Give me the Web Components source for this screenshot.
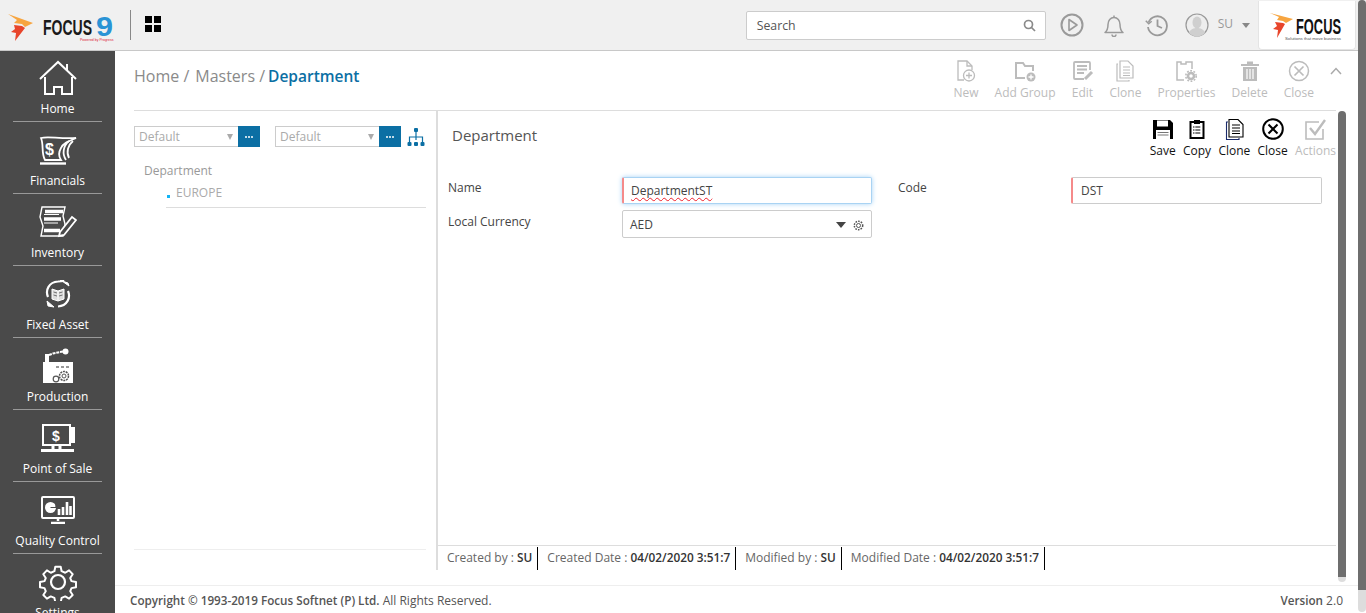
<!DOCTYPE html>
<html lang="en">
<head>
<meta charset="utf-8">
<title>Department</title>
<style>
html,body{margin:0;height:100%;overflow:hidden;background:#fff;font-family:"Open Sans","Noto Sans",sans-serif}
svg{display:block}
</style>
</head>
<body>
<focus-app>
  <top-bar slot="top">
    <brand-logo></brand-logo>
    <search-box slot="search">Search</search-box>
    <svg slot="icons" width="24" height="24" viewBox="0 0 24 24" fill="none" stroke="#9a9a9a" stroke-width="2"><circle cx="12" cy="12" r="10.5"/><path d="M9 6.500v11l8-5.500z" stroke-width="1.600" stroke-linejoin="round"/></svg>
    <svg slot="icons" width="24" height="24" viewBox="0 0 24 24" fill="none" stroke="#9a9a9a" stroke-width="1.500"><path d="M3 19.500c2.500-2 3-4 3-8 0-4 2.500-7 6-7s6 3 6 7c0 4 .5 6 3 8z" stroke-linejoin="round"/><path d="M10 21.500a2 2 0 0 0 4 0M12 4.500V2.500"/></svg>
    <svg slot="icons" width="24" height="24" viewBox="0 0 24 24" fill="none" stroke="#9a9a9a" stroke-width="1.800"><path d="M3.500 9.500A9.500 9.500 0 1 1 3 14"/><path d="M.8 7.800l2.900 3 3-2.600" stroke-width="1.500"/><path d="M12.500 6.500v6.500l4.500 2"/></svg>
    <user-menu slot="user">SU</user-menu>
    <partner-logo slot="partner"></partner-logo>
  </top-bar>

  <side-nav slot="side">
    <nav-item><svg slot="icon" width="38" height="36" viewBox="0 0 38 36" fill="none" stroke="#fff" stroke-width="2"><path d="M1 19 19 2 37 19"/><path d="M28 10V4"/><path d="M6 17V34H15V27H23V34H33V17"/></svg>Home</nav-item>
    <nav-item><svg slot="icon" width="38" height="30" viewBox="0 0 38 30" fill="none" stroke="#fff" stroke-width="2"><path d="M2 3C9 1 20 4 37 3 30 6 24 8 22 13 19 18 20 22 22 25H6C2 18 5 10 2 3Z" stroke-width="1.800"/><path d="M30 6C24 11 23 19 27 25M34 6C29 10 27 17 30 23" stroke-width="1.800"/><path d="M1 28.500H27" stroke-width="2.400"/><text x="6" y="20" font-family="'Liberation Sans',sans-serif" font-weight="700" font-size="16" fill="#fff" stroke="none">$</text></svg>Financials</nav-item>
    <nav-item><svg slot="icon" width="38" height="32" viewBox="0 0 38 32" fill="none" stroke="#fff" stroke-width="1.400"><path d="M3 1H26L24 10 26 18 24 30H2L4 20 1 11Z"/><path d="M6 5.500H24M5 13H22M5 24.500H21" stroke-width="3.400"/><path d="M5 8.500H20M5 17H19" stroke-width="1"/><path d="M21 26 33 11 37 14 25 29 20 30Z" fill="#4a4a4a" stroke-width="1.800"/></svg>Inventory</nav-item>
    <nav-item><svg slot="icon" width="26" height="28" viewBox="0 0 26 28" fill="none" stroke="#fff"><path d="M3 17C0 10 4 2 13 1.500L19 1 15 -0M23 11C26 18 22 26 13 26.500" stroke-width="2.200"/><path d="M2 21 9 27 3 26ZM24 6 17 1 23 3Z" fill="#fff"/><path d="M7 9 13 11 19 9V19L13 21 7 19ZM13 11V21" fill="#ddd" stroke-width="1"/><path d="M8.500 12 12 13M8.500 15 12 16M14 13 17.500 12M14 16 17.500 15" stroke="#555" stroke-width=".8"/></svg>Fixed Asset</nav-item>
    <nav-item><svg slot="icon" width="30" height="36" viewBox="0 0 30 36" fill="none" stroke="#fff"><path d="M2 14V6H6V14Z" fill="#fff" stroke="none"/><path d="M6 7 10 5.500 15 4.500 20 3.500" stroke-width="2" stroke-dasharray="3 .8"/><circle cx="22.500" cy="3.500" r="3" fill="#fff" stroke="none"/><path d="M0 35V14H30V35Z" fill="#fff" stroke="none"/><path d="M13 19h3M18 19h3M23 19h3" stroke="#777" stroke-width="1.500"/><circle cx="21" cy="28" r="4.500" fill="#fff" stroke="#555" stroke-width="1.500" stroke-dasharray="2 .8"/><circle cx="21" cy="28" r="2" fill="#fff" stroke="#555"/><circle cx="13" cy="31" r="2.800" fill="#fff" stroke="#555" stroke-width="1.200"/></svg>Production</nav-item>
    <nav-item><svg slot="icon" width="36" height="28" viewBox="0 0 36 28" fill="none" stroke="#fff" stroke-width="2"><rect x="3" y="1" width="27" height="20"/><path d="M30 4H34V18H30" fill="#fff"/><path d="M1 26.500H34" stroke-width="3"/><path d="M13 21V25M20 21V25" stroke-width="3"/><text x="12" y="17" font-family="'Liberation Sans',sans-serif" font-weight="700" font-size="14" fill="#fff" stroke="none">$</text></svg>Point of Sale</nav-item>
    <nav-item><svg slot="icon" width="34" height="28" viewBox="0 0 34 28" fill="none" stroke="#fff" stroke-width="2"><rect x="1" y="1" width="32" height="21" rx="1"/><path d="M17 22V25M10 27H24" stroke-width="2.500"/><circle cx="9.500" cy="11.500" r="5.500" fill="#fff" stroke="none"/><path d="M9.500 11.500H15V8" stroke="#4a4a4a" stroke-width="1.200"/><path d="M18 19V13M22 19V11M26 19V6M29.500 19V10" stroke-width="2.600"/></svg>Quality Control</nav-item>
    <nav-item><svg slot="icon" width="38" height="38" viewBox="0 0 38 38" fill="none" stroke="#fff" stroke-width="2.200" stroke-linejoin="round"><path d="M16 2h6l1 5 4 1.700 4.300-2.700 4 4.300-2.700 4.300 1.400 3.400 5 1v5.800l-5 1-1.400 3.400 2.700 4.300-4 4-4.300-2.500-4 1.600-1 5h-6l-1-5-4-1.600-4.300 2.500-4-4 2.700-4.300-1.400-3.400-5-1v-5.800l5-1 1.400-3.400L2.700 10.300l4-4.300L11 8.700 15 7z" transform="translate(1.900 1.900) scale(.9)"/><circle cx="19" cy="19" r="7"/></svg>Settings</nav-item>
  </side-nav>

  <main-view slot="main">
    <page-head slot="head">
      <bread-crumb>
        <span>Home /</span><span style="margin-left:1px">Masters /</span><b>Department</b>
      </bread-crumb>
      <tool-bar>
        <tool-btn><svg slot="icon" width="20" height="22" viewBox="0 0 20 22" fill="none" stroke="currentColor" stroke-width="1.300"><path d="M8 20H2V1H11L16 6V10"/><path d="M11 1V6H16"/><circle cx="13" cy="15.500" r="5.500"/><path d="M13 12.500v6M10 15.500h6"/></svg>New</tool-btn>
        <tool-btn><svg slot="icon" width="22" height="22" viewBox="0 0 22 22" fill="none" stroke="currentColor" stroke-width="2"><path d="M11 18H2V3H9L11 6H19V11"/><circle cx="17" cy="17" r="4.500" fill="currentColor" stroke="none"/><path d="M17 14.500v5M14.500 17h5" stroke="#fff" stroke-width="1.300"/></svg>Add Group</tool-btn>
        <tool-btn><svg slot="icon" width="22" height="22" viewBox="0 0 22 22" fill="none" stroke="currentColor" stroke-width="1.800"><path d="M12 19H3a1 1 0 0 1-1-1V3a1 1 0 0 1 1-1h14a1 1 0 0 1 1 1v7"/><path d="M5 6h10M5 9.500h10M5 13h7"/><path d="M13 19 20 12" stroke-width="3"/></svg>Edit</tool-btn>
        <tool-btn><svg slot="icon" width="20" height="22" viewBox="0 0 20 22" fill="none" stroke="currentColor" stroke-width="1.200"><path d="M3 4H2V21H14V20"/><path d="M5 1H13L18 6V18H5Z"/><path d="M8 7h7M8 10h7M8 13h7M8 15.500h7"/></svg>Clone</tool-btn>
        <tool-btn><svg slot="icon" width="22" height="22" viewBox="0 0 22 22" fill="none" stroke="currentColor" stroke-width="1.500"><path d="M9 20H2V2H6V4H11V2H17V9"/><circle cx="16" cy="16" r="3" stroke-width="2.500"/><circle cx="16" cy="16" r="5.200" stroke-width="1.600" stroke-dasharray="1.800 1.500"/></svg>Properties</tool-btn>
        <tool-btn><svg slot="icon" width="20" height="22" viewBox="0 0 20 22" fill="currentColor"><path d="M1 4H19V6H1ZM7 1.500H13V4H7ZM3 7H17V21H3Z"/><path d="M7 9V19M10 9V19M13 9V19" stroke="#fff" stroke-width="1.200"/></svg>Delete</tool-btn>
        <tool-btn><svg slot="icon" width="22" height="22" viewBox="0 0 22 22" fill="none" stroke="currentColor" stroke-width="1.500"><circle cx="11" cy="11" r="9.500"/><path d="M6.500 6.500 15.500 15.500M15.500 6.500 6.500 15.500" stroke-width="1.700"/></svg>Close</tool-btn>
        <svg slot="end" width="12" height="8" viewBox="0 0 12 8" fill="none" stroke="#aaa" stroke-width="1.500"><path d="M1 7 6 1.500 11 7"/></svg>
      </tool-bar>
    </page-head>

    <tree-panel slot="left">
      <picker-row>
        <combo-pick>Default</combo-pick>
        <combo-pick>Default</combo-pick>
        <svg width="18" height="20" viewBox="0 0 18 20" fill="#0b6fa4" stroke="#0b6fa4"><rect x="7" y="1" width="4" height="4" rx="1" stroke="none"/><path d="M9 4V13M2.500 15V10H15.500V15" fill="none" stroke-width="1.200"/><g stroke="none"><rect x=".5" y="15" width="4" height="4" rx="1"/><rect x="7" y="15" width="4" height="4" rx="1"/><rect x="13.500" y="15" width="4" height="4" rx="1"/></g></svg>
      </picker-row>
      <tree-root>Department</tree-root>
      <tree-node>EUROPE</tree-node>
    </tree-panel>

    <detail-panel slot="right">
      <form-head slot="head">
        <span slot="title">Department</span>
        <tool-btn dark><svg slot="icon" width="22" height="21" viewBox="0 0 22 21"><path d="M1 1H18L21 4V20H1Z" fill="#000"/><rect x="5" y="1.500" width="11" height="6" fill="#fff"/><rect x="4" y="11" width="14" height="9" fill="#fff"/><path d="M5.500 13.500h11M5.500 16h11" stroke="#777"/></svg>Save</tool-btn>
        <tool-btn dark><svg slot="icon" width="16" height="20" viewBox="0 0 16 20" fill="none" stroke="#000"><rect x="1.500" y="3" width="13" height="16" stroke-width="2"/><rect x="5" y="1" width="6" height="4" fill="#000" stroke="none"/><path d="M4 8h8M4 11h8M4 14h8" stroke-dasharray="1.500 .8 5"/></svg>Copy</tool-btn>
        <tool-btn dark><svg slot="icon" width="19" height="21" viewBox="0 0 19 21" fill="none" stroke="#000" stroke-width="1.100"><path d="M3 3H1.500V20.500H14V19" stroke="#1a2a6a"/><path d="M4 .5H13L18 5.500V18H4Z"/><path d="M7 6h8M7 9h8M7 12h8M7 14.500h8"/></svg>Clone</tool-btn>
        <tool-btn dark><svg slot="icon" width="22" height="22" viewBox="0 0 22 22" fill="none" stroke="#000" stroke-width="2"><circle cx="11" cy="11" r="9.800"/><path d="M6.500 6.500 15.500 15.500M15.500 6.500 6.500 15.500"/></svg>Close</tool-btn>
        <tool-btn><svg slot="icon" width="21" height="21" viewBox="0 0 21 21" fill="none" stroke="currentColor" stroke-width="1.600"><path d="M18 10V20H1V3H14"/><path d="M5 9 10 15 20 1" stroke-width="2.400"/></svg>Actions</tool-btn>
      </form-head>
      <form-grid slot="form">
        <form-label>Name</form-label>
        <text-field required focused><span style="text-decoration:underline wavy #f0202c 1px;text-underline-offset:2px;text-decoration-skip-ink:none">DepartmentST</span></text-field>
        <form-label>Code</form-label>
        <text-field required>DST</text-field>
        <form-label second>Local Currency</form-label>
        <select-field>AED</select-field>
      </form-grid>
      <status-bar slot="status">
        <status-cell>Created by : <b>SU</b></status-cell>
        <status-cell>Created Date : <b>04/02/2020 3:51:7</b></status-cell>
        <status-cell>Modified by : <b>SU</b></status-cell>
        <status-cell>Modified Date : <b>04/02/2020 3:51:7</b></status-cell>
      </status-bar>
    </detail-panel>
  </main-view>

  <app-footer slot="footer">
    <span><b style="font-weight:600;font-size:11.700px">Copyright © 1993-2019 Focus Softnet (P) Ltd.</b> All Rights Reserved.</span>
    <span slot="end"><b style="font-weight:600;font-size:11.700px">Version</b> 2.0</span>
  </app-footer>

  <scroll-thumb slot="overlay" style="--x:1358px;--y:0px;--h:612px;--w:8px;--tail:22px"></scroll-thumb>
  <scroll-thumb slot="overlay" style="--x:1338px;--y:111px;--h:471px;--w:8px;--tail:5px"></scroll-thumb>
</focus-app>

<script>
function def(name, css, html){
  customElements.define(name, class extends HTMLElement{
    constructor(){
      super();
      this.attachShadow({mode:'open'}).innerHTML = '<style>'+css+'</style>'+html;
    }
  });
}

def('focus-app',
`:host{display:grid;grid-template-columns:115px 1fr;grid-template-rows:51px 534px 28px;width:1366px;height:613px;position:relative;overflow:hidden;color:#444;font:12px/16px "Open Sans","Noto Sans",sans-serif}
 .top{grid-column:1/3}`,
`<div class="top"><slot name="top"></slot></div>
 <slot name="side"></slot>
 <slot name="main"></slot>
 <slot name="footer"></slot>
 <slot name="overlay"></slot>`);

def('top-bar',
`:host{display:flex;align-items:center;height:51px;box-sizing:border-box;background:#f0f0f0;border-bottom:1px solid #c8c8c8}
 .rule{width:1px;height:30px;background:#888;margin-left:8px}
 .apps{display:grid;grid-template-columns:7px 7px;grid-auto-rows:7px;gap:2px;margin:-3px 0 0 14px}
 .apps i{width:7px;height:7px;background:#000;display:block}
 .right{margin-left:auto;display:flex;align-items:center}
 .icons{display:flex;align-items:center;gap:18.500px;margin-left:14px}
 .end{margin-left:8px;margin-right:10px;align-self:flex-start}`,
`<slot></slot><span class="rule"></span>
 <span class="apps"><i></i><i></i><i></i><i></i></span>
 <div class="right">
   <slot name="search"></slot>
   <div class="icons"><slot name="icons"></slot></div>
   <slot name="user"></slot>
   <div class="end"><slot name="partner"></slot></div>
 </div>`);

def('brand-logo',
`:host{display:block;width:122px;height:50px;flex:none}`,
`<svg width="122" height="50" viewBox="0 0 122 50">
  <path fill="#f7a540" d="M8 14 33 23 25 27 22 24 14 23 17 20Z"/><path fill="#e8452b" d="M14 25 22 26 25 28 15 41 16 33 11 32 15 29Z"/>
  <text x="43" y="35" font-family="'Liberation Sans',sans-serif" font-weight="700" font-size="22" textLength="49" lengthAdjust="spacingAndGlyphs" fill="#1a1a1a">FOCUS</text>
  <text x="96" y="36" font-family="'Liberation Sans',sans-serif" font-weight="700" font-size="28" textLength="17" lengthAdjust="spacingAndGlyphs" fill="#2a93d5">9</text>
  <text x="80" y="41" font-family="'Liberation Sans',sans-serif" font-size="3.500" fill="#d23">Powered by Progress</text>
 </svg>`);

def('search-box',
`:host{display:flex;align-items:center;justify-content:space-between;box-sizing:border-box;width:300px;height:29px;padding:1px 9px 0 10px;background:#fff;border:1px solid #ccc;border-radius:2px;color:#555;font-size:12.300px}`,
`<slot></slot><svg width="13" height="13" viewBox="0 0 13 13" fill="none" stroke="#8a8a8a" stroke-width="1.700"><circle cx="5.500" cy="5.500" r="4"/><path d="M8.500 8.500 12 12"/></svg>`);

def('user-menu',
`:host{display:flex;align-items:center;margin-left:16px;color:#999;font-size:12px}
 span{margin:-3px 0 0 9px}
 i{width:0;height:0;border:4px solid transparent;border-top:5px solid #888;border-bottom:0;margin-left:9px}`,
`<svg width="24" height="24" viewBox="0 0 24 24"><circle cx="12" cy="12" r="11" fill="#eee" stroke="#999" stroke-width="1.200"/><ellipse cx="12" cy="9.500" rx="4.500" ry="6" fill="#cfcfcf"/><path d="M4 20c1-4 5-5 8-5s7 1 8 5a11 11 0 0 1-16 0z" fill="#cfcfcf"/></svg><span><slot></slot></span><i></i>`);

def('partner-logo',
`:host{display:block;width:98px;height:49px;background:#fff;border:1px solid #e4e4e4;border-top:0;border-radius:0 0 4px 4px;box-sizing:border-box}`,
`<svg width="96" height="48" viewBox="0 0 96 48">
  <path fill="#f7a540" d="M11 12 34 18 27 22 24 20 18 19 20 16Z"/><path fill="#e8452b" d="M16 21 24 22 26 23 18 37 19 29 14 28 18 25Z"/>
  <text x="37" y="32.500" font-family="'Liberation Sans',sans-serif" font-weight="700" font-size="21.500" textLength="45" lengthAdjust="spacingAndGlyphs" fill="#111">FOCUS</text>
  <text x="26" y="38.500" font-family="'Liberation Sans',sans-serif" font-size="4" textLength="56" lengthAdjust="spacingAndGlyphs" fill="#555">Solutions that move business</text>
 </svg>`);

def('side-nav',
`:host{display:block;background:#4a4a4a;grid-row:2/4;overflow:hidden;height:562px}
 ::slotted(:first-child){margin-top:-1px}`,
`<slot></slot>`);

def('nav-item',
`:host{display:flex;flex-direction:column;align-items:center;box-sizing:border-box;height:72px;padding:8px 0 4px;position:relative;color:#fff;font-size:12px;line-height:16px;white-space:nowrap}
 .i{height:40px;display:flex;align-items:center;justify-content:center}
 .t{margin-top:3px}
 .r{position:absolute;left:13px;right:13px;bottom:0;height:1px;background:#999}`,
`<div class="i"><slot name="icon"></slot></div><div class="t"><slot></slot></div><div class="r"></div>`);

def('main-view',
`:host{display:flex;flex-direction:column;padding:0 30px 0 19px;min-width:0}
 .body{display:flex;height:459px}`,
`<slot name="head"></slot><div class="body"><slot name="left"></slot><slot name="right"></slot></div>`);

def('page-head',
`:host{display:flex;justify-content:space-between;box-sizing:border-box;height:60px;border-bottom:1px solid #ddd}`,
`<slot></slot>`);

def('bread-crumb',
`:host{display:flex;gap:5px;padding-top:14px;font-size:16px;line-height:22px;color:#8a8a8a}
 ::slotted(b){color:#0b6fa4;font-weight:600;font-size:15.500px;margin-left:-2px}`,
`<slot></slot>`);

def('tool-bar',
`:host{display:flex;align-items:flex-start;gap:16px;padding:9px 0 0;margin-right:-6px}
 .end{padding-top:7px}`,
`<slot></slot><div class="end"><slot name="end"></slot></div>`);

def('tool-btn',
`:host{display:flex;flex-direction:column;align-items:center;color:#bcbcbc;font-size:12px;line-height:16px;white-space:nowrap}
 :host([dark]){color:#111}
 .i{height:22px;display:flex;align-items:center;justify-content:center;margin-bottom:3px}`,
`<div class="i"><slot name="icon"></slot></div><slot></slot>`);

def('tree-panel',
`:host{display:flex;flex-direction:column;box-sizing:border-box;width:302px;flex:none;padding:15px 10px 20px 0;position:relative}
 .line{margin-top:auto;height:1px;background:#eee}`,
`<slot></slot><div class="line"></div>`);

def('picker-row',
`:host{display:flex;align-items:center;gap:15px}
 ::slotted(svg){margin-left:-9px}`,
`<slot></slot>`);

def('combo-pick',
`:host{display:flex;box-sizing:border-box;width:126px;height:21px;color:#aaa;font-size:12px;line-height:19px}
 .box{flex:1;display:flex;align-items:center;justify-content:space-between;padding:0 5px 0 4px;border:1px solid #ccc;border-right:0}
 .box i{width:0;height:0;border:3.500px solid transparent;border-top:6px solid #aaa;border-bottom:0}
 .btn{width:22px;background:#0b6fa4;display:flex;align-items:center;justify-content:center;gap:1px}
 .btn u{width:2px;height:2px;border-radius:50%;background:#fff}`,
`<div class="box"><span><slot></slot></span><i></i></div><div class="btn"><u></u><u></u><u></u></div>`);

def('tree-root',
`:host{display:block;margin:16px 0 0 10px;color:#999;font-size:12px;line-height:16px}`,
`<slot></slot>`);

def('tree-node',
`:host{display:flex;align-items:center;gap:6px;height:22px;margin:3px 0 0 32px;padding:0 0 3px 1px;border-bottom:1px solid #ddd;color:#aaa;font-size:12px}
 i{width:3px;height:3px;background:#12b4f5;margin-top:6px}`,
`<i></i><slot></slot>`);

def('detail-panel',
`:host{display:flex;flex-direction:column;flex:1;min-width:0;border-left:2px solid #ddd}
 .form{flex:1}`,
`<slot name="head"></slot><div class="form"><slot name="form"></slot></div><slot name="status"></slot>`);

def('form-head',
`:host{display:flex;justify-content:space-between;box-sizing:border-box;height:66px;padding:7px 0 0 14px}
 .t{color:#555;font-size:15px;line-height:20px;padding-top:7px}
 .btns{display:flex;gap:7.250px;align-items:flex-start}`,
`<div class="t"><slot name="title"></slot></div><div class="btns"><slot></slot></div>`);

def('form-grid',
`:host{display:grid;grid-template-columns:174px 250px 199px 251px;grid-auto-rows:auto;row-gap:6px;padding-left:10px;align-items:start}`,
`<slot></slot>`);

def('form-label',
`:host{display:block;color:#444;font-size:12px;line-height:20px;margin-top:1px}
 :host(:nth-of-type(2)){margin-left:26px}
 :host([second]){margin-top:2px}`,
`<slot></slot>`);

def('text-field',
`:host{display:flex;align-items:center;box-sizing:border-box;height:27px;padding:0 0 0 8px;background:#fff;border:1px solid #ccc;border-radius:2px;color:#444;font-size:12px}
 :host([required]){border-left:2px solid #f58a8a}
 :host([focused]){padding-left:7px;border-color:#a9d3f3;border-left-color:#f58a8a;box-shadow:0 0 5px #a5d3f6}`,
`<slot></slot>`);

def('select-field',
`:host{display:flex;align-items:center;box-sizing:border-box;height:28px;padding:2px 7px 0 7px;border:1px solid #ccc;border-radius:2px;color:#444;font-size:12px}
 span{flex:1}
 i{width:0;height:0;border:5.500px solid transparent;border-top:6px solid #444;border-bottom:0;margin-right:7px}`,
`<span><slot></slot></span><i></i><svg width="11" height="11" viewBox="0 0 11 11" fill="none" stroke="#555"><circle cx="5.500" cy="5.500" r="2"/><circle cx="5.500" cy="5.500" r="4.200" stroke-width="1.500" stroke-dasharray="1.600 1.100"/></svg>`);

def('status-bar',
`:host{display:flex;box-sizing:border-box;height:25px;border-top:1px solid #ddd}`,
`<slot></slot>`);

def('status-cell',
`:host{display:block;height:23px;margin-top:1px;padding:0 5px 0 9px;border-right:1px solid #000;color:#666;font-size:12px;line-height:21px;white-space:nowrap}
 ::slotted(b){color:#333;font-weight:600;font-size:11.800px}`,
`<slot></slot>`);

def('app-footer',
`:host{display:flex;justify-content:space-between;align-items:center;box-sizing:border-box;height:28px;padding:2px 23px 0 15px;border-top:1px solid #eee;color:#555;font-size:12px}
 ::slotted(*){white-space:nowrap}`,
`<slot></slot><slot name="end"></slot>`);

def('scroll-thumb',
`:host{position:absolute;left:var(--x);top:var(--y);width:var(--w);height:var(--h);background:linear-gradient(#6e6e6e calc(100% - var(--tail)),#ddd 0);border-radius:4px}`,
``);
</script>
</body>
</html>
